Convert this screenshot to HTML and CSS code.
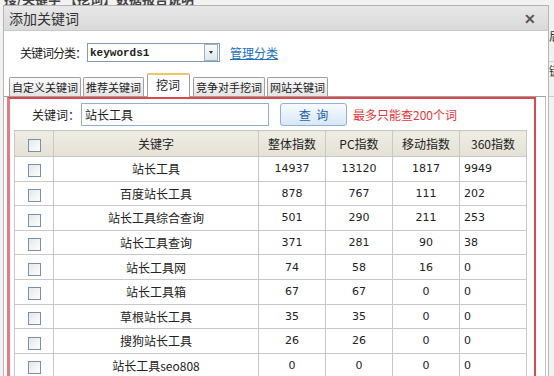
FILE: index.html
```html
<!DOCTYPE html>
<html lang="zh-CN">
<head>
    <meta charset="UTF-8">
    <title>添加关键词</title>
    <link rel="stylesheet" href="styles.css">
</head>
<body>
    <div class="page">
        <div class="page-title">搜/关键字 【挖词】数据报告说明</div>
        <div class="page-rows">
            <div class="page-row">后台关键词</div>
            <div class="page-row">键词管理</div>
        </div>
    </div>

    <div class="dialog">
        <div class="dialog-title">
            <span>添加关键词</span>
            <span class="close-btn">✕</span>
        </div>
        <div class="dialog-body">
            <div class="category-row">
                <span class="field-label">关键词分类：</span>
                <div class="select">
                    <span class="select-text">keywords1</span>
                    <span class="select-btn"></span>
                </div>
                <a class="manage-link" href="#">管理分类</a>
            </div>

            <div class="tabs">
                <div class="tab">自定义关键词</div>
                <div class="tab">推荐关键词</div>
                <div class="tab active">挖词</div>
                <div class="tab">竞争对手挖词</div>
                <div class="tab">网站关键词</div>
            </div>

            <div class="tab-panel">
                <div class="mark-box">
                    <div class="search-row">
                        <span class="search-label">关键词：</span>
                        <input class="search-input" type="text" value="站长工具">
                        <button class="search-btn">查&nbsp;&nbsp;询</button>
                        <span class="search-tip">最多只能查200个词</span>
                    </div>

                    <table class="word-table">
                        <thead>
                            <tr>
                                <th class="col-check"><span class="checkbox"></span></th>
                                <th class="col-word">关键字</th>
                                <th class="col-num">整体指数</th>
                                <th class="col-num">PC指数</th>
                                <th class="col-num">移动指数</th>
                                <th class="col-num">360指数</th>
                            </tr>
                        </thead>
                        <tbody id="rows"></tbody>
                    </table>
                </div>
            </div>
        </div>
    </div>

    <script>
        const words = [
            ['站长工具', 14937, 13120, 1817, 9949],
            ['百度站长工具', 878, 767, 111, 202],
            ['站长工具综合查询', 501, 290, 211, 253],
            ['站长工具查询', 371, 281, 90, 38],
            ['站长工具网', 74, 58, 16, 0],
            ['站长工具箱', 67, 67, 0, 0],
            ['草根站长工具', 35, 35, 0, 0],
            ['搜狗站长工具', 26, 26, 0, 0],
            ['站长工具seo808', 0, 0, 0, 0]
        ];

        const tbody = document.getElementById('rows');
        words.forEach(w => {
            const tr = document.createElement('tr');
            tr.innerHTML =
                '<td class="col-check"><span class="checkbox"></span></td>' +
                `<td class="col-word">${w[0]}</td>` +
                `<td class="num">${w[1]}</td>` +
                `<td class="num">${w[2]}</td>` +
                `<td class="num">${w[3]}</td>` +
                `<td class="num left">${w[4]}</td>`;
            tbody.appendChild(tr);
        });
    </script>
</body>
</html>
```

FILE: styles.css
```css
body {
    margin: 0;
    width: 554px;
    height: 376px;
    overflow: hidden;
    background-color: #f2f2f2;
    font-family: "Noto Sans CJK SC", "Liberation Sans", sans-serif;
    font-size: 12px;
    color: #222;
    position: relative;
}
.page {
    height: 376px;
}
.page-title {
    margin-top: -9px;
    padding-left: 4px;
    font-size: 13px;
    font-weight: bold;
    color: #444;
    line-height: 16px;
}
.page-rows {
    margin-left: 549px;
    margin-top: 20px;
}
.page-row {
    height: 34px;
    border-bottom: 1px solid #ccc;
    white-space: nowrap;
    color: #333;
}
.dialog {
    position: absolute;
    left: 3px;
    top: 5px;
    width: 544px;
    height: 380px;
    background-color: #fff;
    border: 1px solid #b5b5b5;
}
.dialog-title {
    height: 24px;
    line-height: 24px;
    padding-left: 5px;
    padding-right: 12px;
    display: flex;
    justify-content: space-between;
    font-size: 14px;
    color: #333;
    background: linear-gradient(#e8e8e8, #d9d9d9);
    border-bottom: 1px solid #c8c8c8;
}
.close-btn {
    font-size: 14px;
    font-weight: bold;
    color: #555;
}
.dialog-body {
    padding-top: 11px;
}
.category-row {
    display: flex;
    align-items: center;
    padding-left: 16px;
    height: 21px;
}
.field-label {
    width: 67px;
    white-space: nowrap;
    letter-spacing: -1px;
    color: #222;
}
.select {
    width: 131px;
    height: 17px;
    border: 1px solid #7f9db9;
    display: flex;
    justify-content: space-between;
    align-items: center;
}
.select-text {
    font-family: "Liberation Mono", monospace;
    font-size: 11px;
    font-weight: bold;
    padding-left: 2px;
    color: #222;
}
.select-btn {
    width: 12px;
    height: 15px;
    margin-right: 1px;
    border: 1px solid #9fb1c6;
    background: linear-gradient(#fafafa, #dfe6ee);
    position: relative;
}
.select-btn::after {
    content: "";
    position: absolute;
    left: 4px;
    top: 6px;
    border-left: 2px solid transparent;
    border-right: 2px solid transparent;
    border-top: 3px solid #333;
}
.manage-link {
    margin-left: 10px;
    color: #1b6fc2;
    text-decoration: underline;
}
.tabs {
    display: flex;
    align-items: flex-end;
    gap: 2px;
    margin-top: 10px;
    padding-left: 5px;
    height: 23px;
}
.tab {
    height: 18px;
    line-height: 18px;
    padding: 0 2px;
    border: 1px solid #a0a0a0;
    border-bottom: none;
    border-radius: 2px 2px 0 0;
    background: linear-gradient(#fbfbfb, #e4e4e4);
    color: #222;
    font-size: 11px;
    white-space: nowrap;
}
.tab.active {
    height: 22px;
    line-height: 20px;
    padding: 0 9px 0 8px;
    margin: 0 1px -1px;
    background: #fff;
    border-top: 2px solid #f2c46a;
    font-size: 12px;
    position: relative;
}
.tab-panel {
    border-top: 1px solid #a0a0a0;
    border-right: 1px solid #c0c0c0;
    width: 541px;
    height: 300px;
}
.mark-box {
    margin-left: 3px;
    width: 524px;
    height: 290px;
    border: 2px solid #e0474c;
    border-left-width: 3px;
    border-left-color: #e9797c;
    padding-top: 4px;
}
.search-row {
    display: flex;
    align-items: center;
    height: 23px;
    padding-left: 22px;
}
.search-label {
    width: 49px;
    white-space: nowrap;
}
.search-input {
    box-sizing: border-box;
    width: 188px;
    height: 23px;
    border: 1px solid #90b0d0;
    padding: 0 3px;
    font-family: "Noto Sans CJK SC", sans-serif;
    font-size: 12px;
    color: #222;
    outline: none;
}
.search-btn {
    margin-left: 11px;
    width: 67px;
    height: 23px;
    border: 1px solid #8eb1d6;
    border-radius: 3px;
    background: linear-gradient(#f7fbff, #d8e7f6);
    color: #1e5fae;
    font-family: "Noto Sans CJK SC", sans-serif;
    font-size: 12px;
    padding: 0;
}
.search-tip {
    margin-left: 6px;
    color: #e8333a;
}
.word-table {
    margin-top: 4px;
    margin-left: 4px;
    width: 508px;
    border-collapse: collapse;
    table-layout: fixed;
}
.word-table th,
.word-table td {
    border: 1px solid #c8c8c8;
    text-align: center;
    padding: 0;
    font-weight: normal;
    white-space: nowrap;
}
.word-table th {
    height: 25px;
    background: linear-gradient(#efede4, #e4e1d4);
    color: #222;
}
.word-table td {
    height: 23.6px;
}
.col-check {
    width: 38px;
}
.col-word {
    width: 204px;
}
.col-num {
    width: 66px;
}
.num {
    font-family: "DejaVu Sans", sans-serif;
    font-size: 11px;
    color: #222;
}
.num.left {
    text-align: left !important;
    padding-left: 4px !important;
}
.checkbox {
    display: inline-block;
    width: 11px;
    height: 11px;
    border: 1px solid #7890a8;
    background: linear-gradient(135deg, #e4e8ec, #fdfdfd);
    vertical-align: middle;
}
```
